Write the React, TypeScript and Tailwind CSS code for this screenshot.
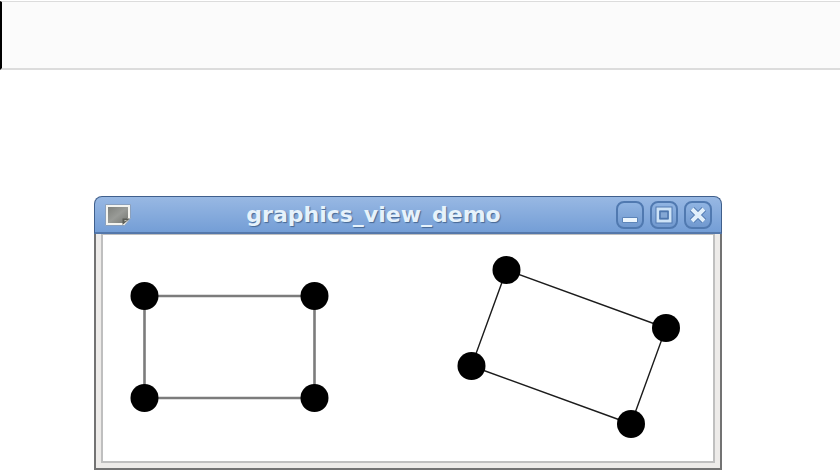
import React from 'react';

type Point = [number, number];

const straightRect: Point[] = [[41.5, 61], [211.5, 61], [211.5, 163], [41.5, 163]];
const rotatedRect: Point[] = [[403.5, 35], [563, 93], [528, 189], [368.5, 131]];

function WindowIcon() {
    return (
        <svg width="26" height="24" viewBox="0 0 26 24" aria-hidden="true">
            <defs>
                <linearGradient id="note" x1="0" y1="0" x2="1" y2="1">
                    <stop offset="0" stopColor="#7e807b" />
                    <stop offset="0.5" stopColor="#999b97" />
                    <stop offset="1" stopColor="#747671" />
                </linearGradient>
            </defs>
            <path d="M0.5 1.5h25v14l-6 7h-19z" fill="#f4f4ef" stroke="#8aa0bd" />
            <path d="M3 4h20v11l-5 5H3z" fill="url(#note)" />
            <path d="M17.5 22v-6.500l7.500 0z" fill="#5b5d57" />
            <path d="M19.500 18.500v-1.500h3z" fill="#c9cac2" />
        </svg>
    );
}

function TitleButton({ label, children }: { label: string; children: React.ReactNode }) {
    return (
        <button type="button" aria-label={label}
                className="flex h-7 w-7 items-center justify-center rounded-lg border-2 border-[#5079b0] bg-linear-to-b from-[#90b4e2] to-[#7199cf]">
            <svg width="20" height="20" viewBox="0 0 20 20" className="shrink-0" aria-hidden="true">
                {children}
            </svg>
        </button>
    );
}

function Shape({ points, stroke, strokeWidth }: { points: Point[]; stroke: string; strokeWidth: number }) {
    return (
        <g>
            <polygon points={points.join(' ')} fill="none" stroke={stroke} strokeWidth={strokeWidth} />
            {points.map(([x, y]) => (
                <circle key={`${x}-${y}`} cx={x} cy={y} r="14" fill="#000" />
            ))}
        </g>
    );
}

function DemoWindow() {
    return (
        <section className="w-full max-w-[628px]">
            <header className="flex h-[38px] items-center gap-1.5 rounded-t-lg border-x border-t border-b-2 border-[#3f5f8c] border-b-[#5478ab] bg-linear-to-b from-[#98b8e3] to-[#749ed6] pr-[9px] pl-2.5">
                <WindowIcon />
                <h1 className="flex-1 text-center font-['DejaVu_Sans',sans-serif] text-[22px] leading-7 font-bold text-[#e6f2fb] [text-shadow:1px_1px_1px_#466894]">
                    graphics_view_demo
                </h1>
                <div className="flex gap-1.5">
                    <TitleButton label="Minimize">
                        <path d="M2.500 12.500h15v5h-15z" fill="#edf6fd" stroke="#5d85b9" />
                    </TitleButton>
                    <TitleButton label="Maximize">
                        <path d="M4 4h12v12H4z" fill="none" stroke="#5079b0" strokeWidth="5" />
                        <path d="M4 4h12v12H4z" fill="none" stroke="#cde3f7" strokeWidth="3" />
                        <path d="M6 6.500h8v7H6z" fill="#84a7d4" stroke="#4d76ad" strokeWidth="1.500" />
                    </TitleButton>
                    <TitleButton label="Close">
                        <path d="M4 4l12 12M16 4l-12 12" fill="none" stroke="#4d76ad" strokeWidth="6" />
                        <path d="M4 4l12 12M16 4l-12 12" fill="none" stroke="#e2f0fb" strokeWidth="4" />
                    </TitleButton>
                </div>
            </header>
            <div className="border-x-2 border-b-2 border-[#737373] bg-[#edebe9] px-[5px] pb-[5px]">
                <div className="border-2 border-t border-[#bfbfbf] bg-white">
                    <svg viewBox="0 0 610 226" className="block h-auto w-full" role="img" aria-label="Two connected rectangles">
                        <Shape points={straightRect} stroke="#7c7c7c" strokeWidth={2.6} />
                        <Shape points={rotatedRect} stroke="#1c1c1c" strokeWidth={1.4} />
                    </svg>
                </div>
            </div>
        </section>
    );
}

export default function App() {
    return (
        <div className="bg-white pt-px">
            <div className="h-[69px] border-t border-b-2 border-l-2 border-[#dcdcdc] border-l-black bg-[#fbfbfb]" />
            <main className="pt-[126px] pr-8 pl-[94px]">
                <DemoWindow />
            </main>
        </div>
    );
}
